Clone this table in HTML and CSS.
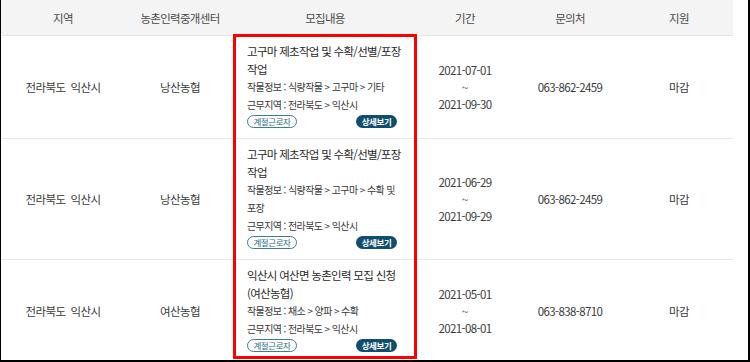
FILE: index.html
```html
<!DOCTYPE html>
<html lang="ko">
<head>
<meta charset="utf-8">
<link rel="stylesheet" href="styles.css">
</head>
<body>
<div class="frame">
  <table class="list">
    <colgroup>
      <col class="c1"><col class="c2"><col class="c3"><col class="c4"><col class="c5"><col class="c6">
    </colgroup>
    <thead>
      <tr><th>지역</th><th>농촌인력중개센터</th><th>모집내용</th><th>기간</th><th>문의처</th><th>지원</th></tr>
    </thead>
    <tbody>
      <tr class="r1">
        <td>전라북도&nbsp; 익산시</td>
        <td>낭산농협</td>
        <td class="content">
          <p class="title">고구마 제초작업 및 수확/선별/포장 작업</p>
          <p class="info">작물정보 : 식량작물 &gt; 고구마 &gt; 기타</p>
          <p class="info">근무지역 : 전라북도 &gt; 익산시</p>
          <div class="btns"><span class="tag">계절근로자</span><span class="more">상세보기</span></div>
        </td>
        <td class="date">2021-07-01<br>~<br>2021-09-30</td>
        <td>063-862-2459</td>
        <td>마감</td>
      </tr>
      <tr class="r2">
        <td>전라북도&nbsp; 익산시</td>
        <td>낭산농협</td>
        <td class="content">
          <p class="title">고구마 제초작업 및 수확/선별/포장 작업</p>
          <p class="info">작물정보 : 식량작물 &gt; 고구마 &gt; 수확 및 포장</p>
          <p class="info">근무지역 : 전라북도 &gt; 익산시</p>
          <div class="btns"><span class="tag">계절근로자</span><span class="more">상세보기</span></div>
        </td>
        <td class="date">2021-06-29<br>~<br>2021-09-29</td>
        <td>063-862-2459</td>
        <td>마감</td>
      </tr>
      <tr class="r3">
        <td>전라북도&nbsp; 익산시</td>
        <td>여산농협</td>
        <td class="content">
          <p class="title">익산시 여산면 농촌인력 모집 신청 (여산농협)</p>
          <p class="info">작물정보 : 채소 &gt; 양파 &gt; 수확</p>
          <p class="info">근무지역 : 전라북도 &gt; 익산시</p>
          <div class="btns"><span class="tag">계절근로자</span><span class="more">상세보기</span></div>
        </td>
        <td class="date">2021-05-01<br>~<br>2021-08-01</td>
        <td>063-838-8710</td>
        <td>마감</td>
      </tr>
    </tbody>
  </table>
  <div class="highlight"></div>
</div>
</body>
</html>
```

FILE: styles.css
```css
html, body {
  margin: 0;
  padding: 0;
  background: #fff;
}
body {
  font-family: "Noto Sans CJK KR", "Noto Sans", sans-serif;
  color: #444;
}
.frame {
  position: relative;
  box-sizing: border-box;
  width: 750px;
  height: 362px;
  overflow: hidden;
  border-left: 1px solid #000;
  border-right: 2px solid #000;
  border-bottom: 2px solid #000;
}
.list {
  width: 732px;
  border-collapse: collapse;
  table-layout: fixed;
}
.c1 { width: 124px; }
.c2 { width: 110px; }
.c3 { width: 180px; }
.c4 { width: 100px; }
.c5 { width: 110px; }
.c6 { width: 108px; }

.list th {
  height: 35px;
  padding: 0;
  background: #f4f4f4;
  border-bottom: 1px solid #e4e4e4;
  font-weight: normal;
  font-size: 11.5px;
  letter-spacing: -0.7px;
  color: #4a4a4a;
  text-align: center;
  vertical-align: middle;
}
.list td {
  padding: 0;
  border-bottom: 1px solid #e8e8e8;
  text-align: center;
  vertical-align: middle;
  font-size: 11.5px;
  letter-spacing: -0.6px;
  color: #3a3a3a;
}
.list td.date {
  line-height: 17px;
}
.list td.content {
  text-align: left;
  word-break: keep-all;
  padding: 6px 12px 10px 12px;
}
.title {
  margin: 0;
  font-size: 11.5px;
  line-height: 18px;
  letter-spacing: -0.7px;
  color: #2a2a2a;
}
.info {
  margin: 0;
  font-size: 10px;
  line-height: 18px;
  letter-spacing: -0.6px;
  color: #3a3a3a;
}
.btns {
  display: flex;
  justify-content: space-between;
  align-items: center;
  margin-top: 1px;
  padding-right: 6px;
}
.tag {
  box-sizing: border-box;
  width: 50px;
  height: 13px;
  border: 1px solid #3d7a96;
  border-radius: 7px;
  font-size: 8.5px;
  line-height: 11px;
  text-align: center;
  color: #2f6a86;
  letter-spacing: -0.4px;
}
.more {
  box-sizing: border-box;
  width: 41px;
  height: 13px;
  border-radius: 7px;
  background: #0f4e6e;
  font-size: 8.5px;
  line-height: 13px;
  font-weight: bold;
  text-align: center;
  color: #fff;
  letter-spacing: -0.4px;
}
.highlight {
  position: absolute;
  left: 232px;
  top: 34px;
  width: 178px;
  height: 319px;
  border: 3px solid #ff0000;
  pointer-events: none;
}
```
